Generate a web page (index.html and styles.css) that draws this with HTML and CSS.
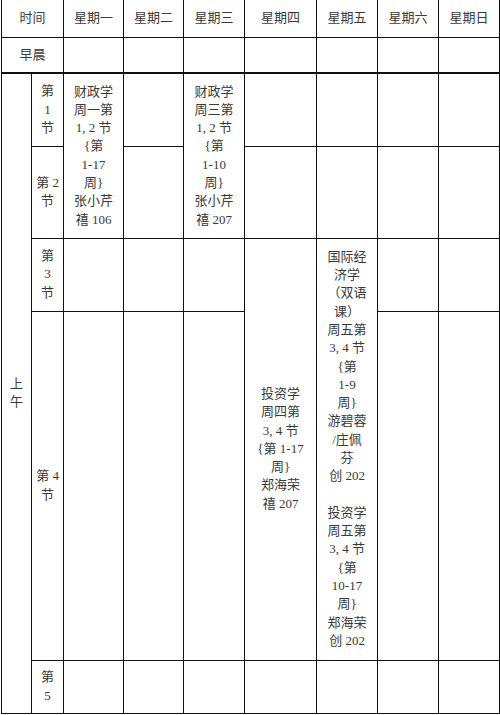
FILE: index.html
```html
<!DOCTYPE html>
<html lang="zh-CN">
<head>
<meta charset="utf-8">
<title>课程表</title>
<link rel="stylesheet" href="styles.css">
</head>
<body>
<table class="schedule">
  <colgroup>
    <col class="c-half">
    <col class="c-sec">
    <col class="c-mon">
    <col class="c-tue">
    <col class="c-wed">
    <col class="c-thu">
    <col class="c-fri">
    <col class="c-sat">
    <col class="c-sun">
  </colgroup>
  <tr class="r-head">
    <th colspan="2">时间</th>
    <th>星期一</th>
    <th>星期二</th>
    <th>星期三</th>
    <th>星期四</th>
    <th>星期五</th>
    <th>星期六</th>
    <th>星期日</th>
  </tr>
  <tr class="r-early">
    <td colspan="2">早晨</td>
    <td></td><td></td><td></td><td></td><td></td><td></td><td></td>
  </tr>
  <tr class="r-1">
    <td rowspan="5" class="half">上<br>午</td>
    <td>第<br>1<br>节</td>
    <td rowspan="2">财政学<br>周一第<br>1, 2 节<br>{第<br>1-17<br>周}<br>张小芹<br>禧 106</td>
    <td></td>
    <td rowspan="2">财政学<br>周三第<br>1, 2 节<br>{第<br>1-10<br>周}<br>张小芹<br>禧 207</td>
    <td></td><td></td><td></td><td></td>
  </tr>
  <tr class="r-2">
    <td>第 2<br>节</td>
    <td></td>
    <td></td><td></td><td></td><td></td>
  </tr>
  <tr class="r-3">
    <td>第<br>3<br>节</td>
    <td></td><td></td><td></td>
    <td rowspan="2">投资学<br>周四第<br>3, 4 节<br>{第 1-17<br>周}<br>郑海荣<br>禧 207</td>
    <td rowspan="2">国际经<br>济学<br>（双语<br>课）<br>周五第<br>3, 4 节<br>{第<br>1-9<br>周}<br>游碧蓉<br>/庄佩<br>芬<br>创 202<br><br>投资学<br>周五第<br>3, 4 节<br>{第<br>10-17<br>周}<br>郑海荣<br>创 202</td>
    <td></td><td></td>
  </tr>
  <tr class="r-4">
    <td>第 4<br>节</td>
    <td></td><td></td><td></td>
    <td></td><td></td>
  </tr>
  <tr class="r-5">
    <td>第<br>5</td>
    <td></td><td></td><td></td><td></td><td></td><td></td><td></td>
  </tr>
</table>
</body>
</html>
```

FILE: styles.css
```css
html, body {
  margin: 0;
  padding: 0;
  background: #ffffff;
}

body {
  width: 500px;
  height: 715px;
  overflow: hidden;
}

.schedule {
  border-collapse: collapse;
  table-layout: fixed;
  width: 499px;
  margin-left: 1px;
  font-family: "Liberation Serif", "Noto Sans CJK SC", serif;
  font-size: 13px;
  font-weight: 400;
  line-height: 18.3px;
  color: #3a3a3a;
}

.schedule th,
.schedule td {
  border: 1px solid #111111;
  padding: 0;
  text-align: center;
  vertical-align: middle;
  font-weight: 400;
  white-space: nowrap;
  overflow: hidden;
}

.schedule .r-head th {
  border-top: 0;
}

.c-half { width: 30px; }
.c-sec { width: 32px; }
.c-mon { width: 60px; }
.c-tue { width: 60px; }
.c-wed { width: 61px; }
.c-thu { width: 72px; }
.c-fri { width: 61px; }
.c-sat { width: 61px; }
.c-sun { width: 61px; }

.r-head { height: 37px; }
.r-early { height: 36px; }
.r-1 { height: 73px; }
.r-2 { height: 92px; }
.r-3 { height: 73px; }
.r-4 { height: 349px; }
.r-5 { height: 53px; }

.r-1 td {
  border-top-width: 2px;
}
```
